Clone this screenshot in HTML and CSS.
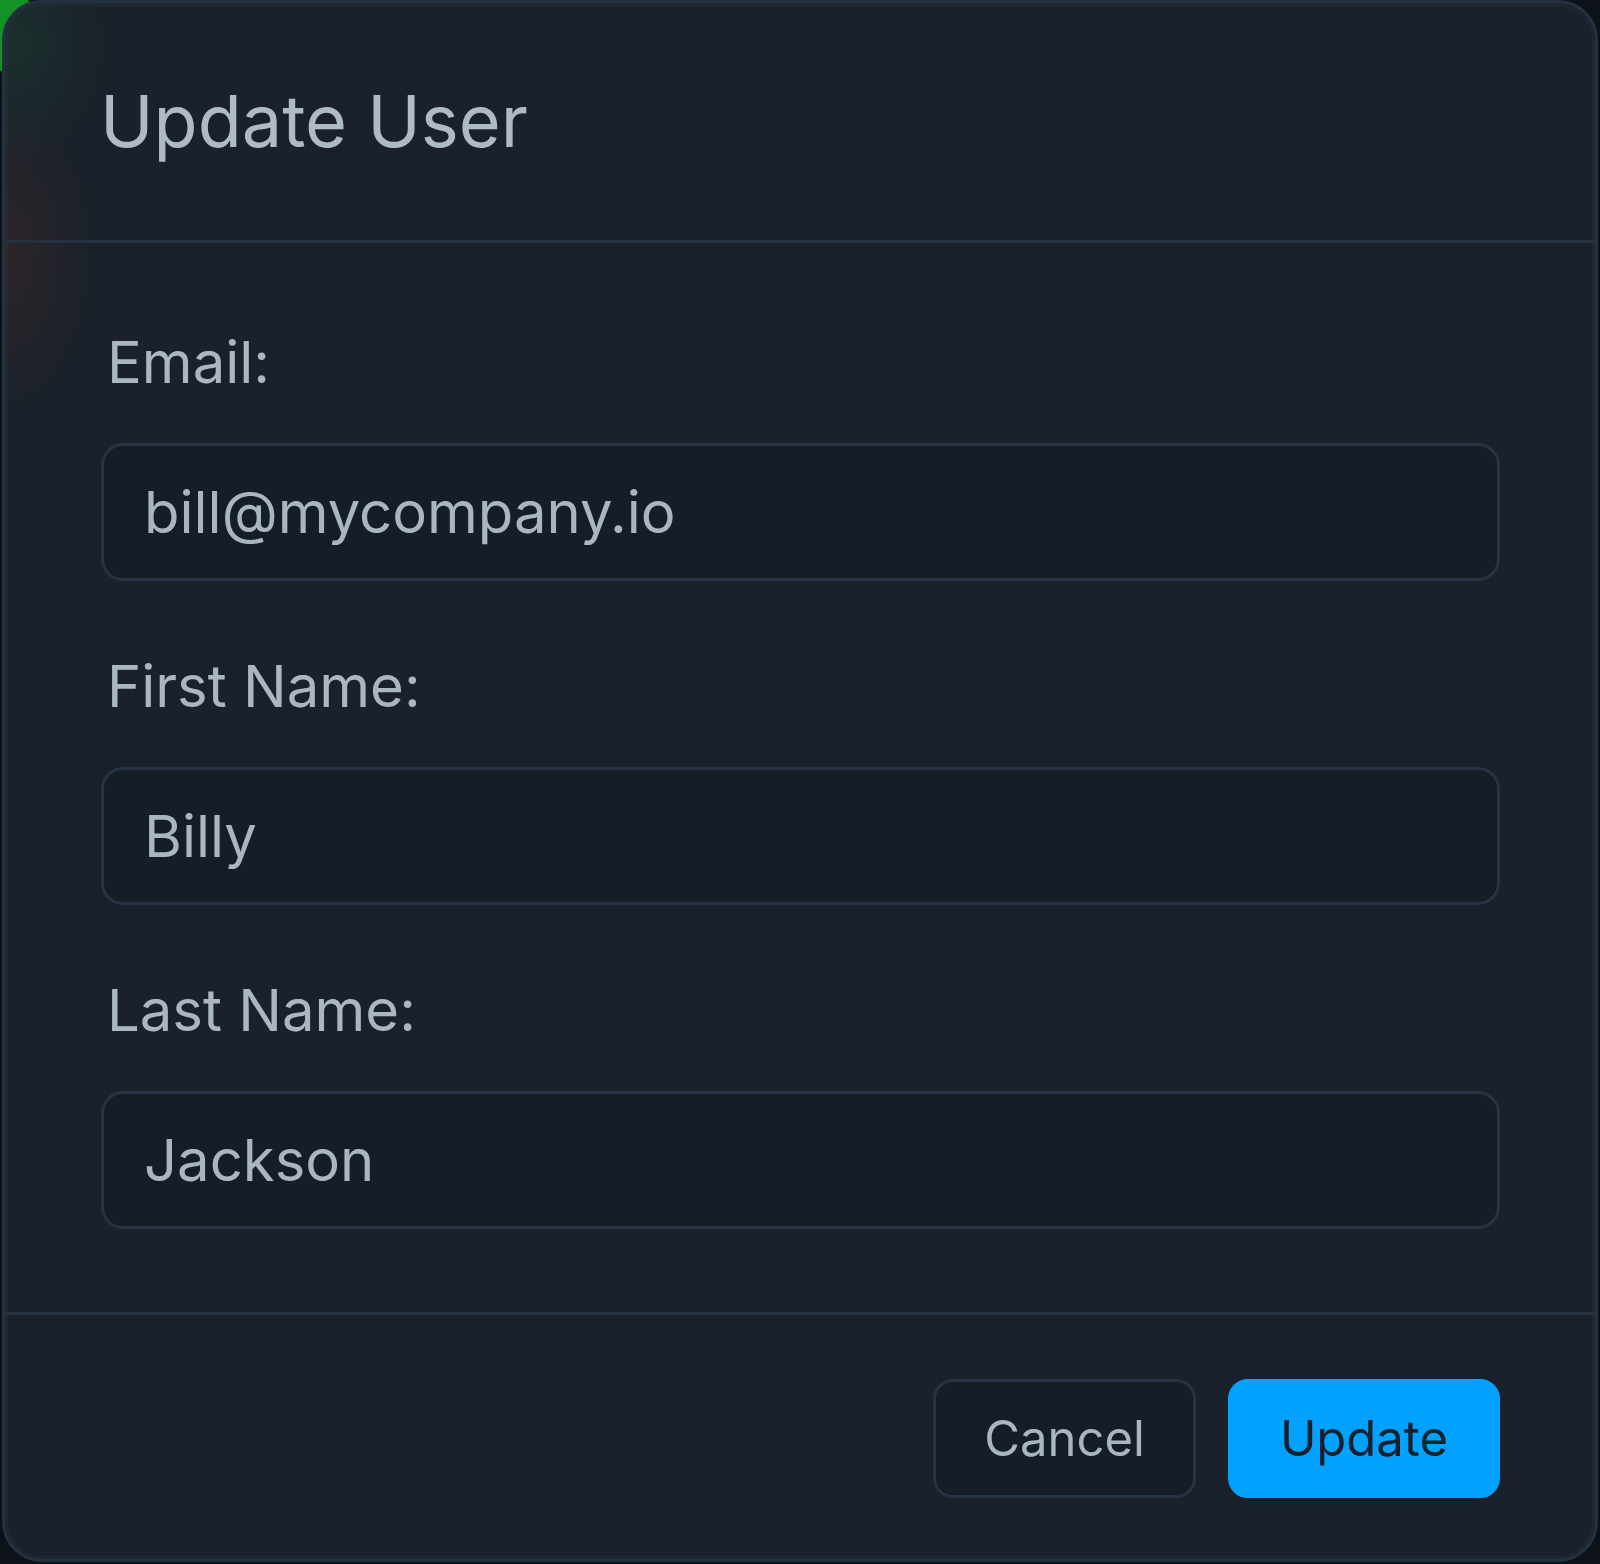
FILE: index.html
```html
<!DOCTYPE html>
<html lang="en">
<head>
<meta charset="utf-8">
<title>Update User</title>
<link rel="stylesheet" href="styles.css">
</head>
<body>
<div class="modal">
  <header class="modal-header">
    <h1 class="modal-title">Update User</h1>
  </header>
  <form class="modal-body">
    <div class="field">
      <label class="field-label" for="email">Email:</label>
      <input class="field-input" id="email" type="text" value="bill@mycompany.io">
    </div>
    <div class="field">
      <label class="field-label" for="first">First Name:</label>
      <input class="field-input" id="first" type="text" value="Billy">
    </div>
    <div class="field">
      <label class="field-label" for="last">Last Name:</label>
      <input class="field-input" id="last" type="text" value="Jackson">
    </div>
  </form>
  <footer class="modal-footer">
    <button class="btn btn-cancel" type="button">Cancel</button>
    <button class="btn btn-primary" type="button">Update</button>
  </footer>
</div>
</body>
</html>
```
FILE: styles.css
```css
html, body {
  margin: 0;
  padding: 0;
  background: #0d1219;
  font-family: Inter, "Noto Sans", "Liberation Sans", sans-serif;
}

body {
  width: 1600px;
  height: 1564px;
  overflow: hidden;
  background:
    radial-gradient(circle at 0 30px, rgba(20, 160, 40, 0.9) 0, rgba(20, 160, 40, 0.9) 40px, transparent 42px),
    #0d1219;
}

.modal {
  box-sizing: border-box;
  margin-left: 2px;
  width: 1596px;
  height: 1562px;
  border: 3px solid #243140;
  border-radius: 40px;
  background:
    radial-gradient(ellipse 90px 160px at 0 250px, rgba(110, 50, 40, 0.22), transparent),
    radial-gradient(ellipse 90px 120px at 10px 40px, rgba(30, 110, 60, 0.18), transparent),
    #1a212a;
  box-shadow: inset 0 0 0 3px rgba(40, 52, 64, 0.35);
  display: flex;
  flex-direction: column;
  overflow: hidden;
  color: #a9b6c1;
}

.modal-header {
  padding: 75px 95px 76px;
  border-bottom: 3px solid #233140;
}

.modal-title {
  margin: 0;
  font-size: 72px;
  line-height: 86px;
  font-weight: 400;
  color: #aebbc6;
}

.modal-body {
  display: flex;
  flex-direction: column;
  gap: 72px;
  padding: 86px 95px 83px 96px;
  border-bottom: 3px solid #233140;
  margin: 0;
}

.field {
  display: flex;
  flex-direction: column;
  gap: 47px;
}

.field-label {
  padding-left: 6px;
  font-size: 58px;
  line-height: 67px;
  color: #aab7c2;
}

.field-input {
  box-sizing: border-box;
  width: 100%;
  height: 138px;
  margin: 0;
  padding: 0 40px;
  border: 3px solid #253344;
  border-radius: 22px;
  background: #151d26;
  color: #a9b6c1;
  font-family: inherit;
  font-size: 58px;
  outline: none;
}

.modal-footer {
  display: flex;
  justify-content: flex-end;
  gap: 32px;
  padding: 64px 95px 61px;
}

.btn {
  box-sizing: border-box;
  height: 119px;
  padding: 0 48px;
  border: 3px solid #253344;
  border-radius: 20px;
  font-family: inherit;
  font-size: 49px;
  line-height: 1;
  cursor: pointer;
}

.btn-cancel {
  background: #151d26;
  color: #a9b6c1;
}

.btn-primary {
  padding: 0 49px;
  border-color: #00a1ff;
  background: #00a1ff;
  color: #16202b;
}
```
